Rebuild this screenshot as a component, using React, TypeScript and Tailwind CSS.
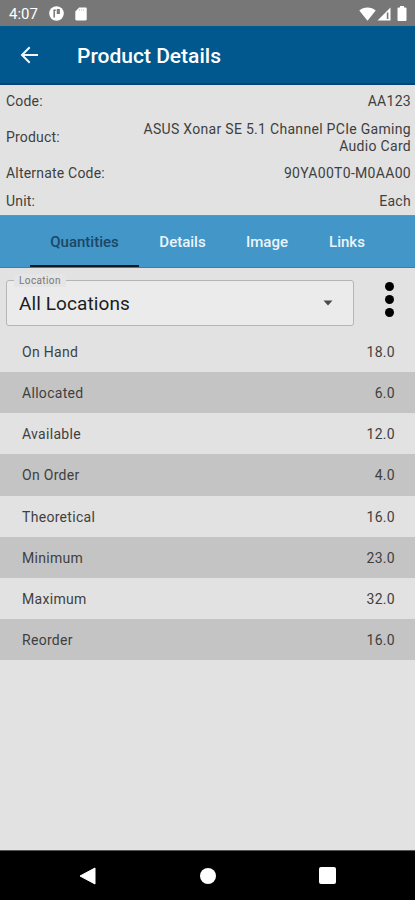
import { useState } from 'react'

const details = [
    { label: 'Code:', value: 'AA123', height: 'h-[29px]' },
    { label: 'Product:', value: 'ASUS Xonar SE 5.1 Channel PCIe Gaming Audio Card', height: 'h-[43px]' },
    { label: 'Alternate Code:', value: '90YA00T0-M0AA00', height: 'h-[29px]' },
    { label: 'Unit:', value: 'Each', height: 'h-[26px]' },
]

const tabs = [
    { label: 'Quantities', width: 'w-[109px]' },
    { label: 'Details', width: 'w-[87px]' },
    { label: 'Image', width: 'w-[82px]' },
    { label: 'Links', width: 'w-[78px]' },
]

const quantities = [
    { label: 'On Hand', value: 18 },
    { label: 'Allocated', value: 6 },
    { label: 'Available', value: 12 },
    { label: 'On Order', value: 4 },
    { label: 'Theoretical', value: 16 },
    { label: 'Minimum', value: 23 },
    { label: 'Maximum', value: 32 },
    { label: 'Reorder', value: 16 },
]

function StatusBar() {
    return (
        <div className="flex h-[26px] items-center bg-[#777777] pt-px pl-[9px] pr-[7px] text-white">
            <span className="w-[40px] pt-px text-[15px] leading-none">4:07</span>
            <svg width="15" height="15" viewBox="0 0 15 15" className="block">
                <circle cx="7.5" cy="7.5" r="7.3" fill="#fff" />
                <path d="M5.200 11.500V4.200M4.400 4.200h2.400M8.500 3.800h1.600v3.400H8.500z" fill="none" stroke="#777" strokeWidth="1.5" />
            </svg>
            <svg width="12" height="14" viewBox="0 0 12 14" className="ml-[11px] block">
                <path d="M4.2.5h6.3c.7 0 1.2.5 1.2 1.2v10.6c0 .7-.5 1.2-1.2 1.2h-9c-.7 0-1.2-.5-1.2-1.2V4.4z" fill="#fff" />
                <path d="M4.5 2v2M6.6 2v2M8.7 2v2" stroke="#ccc" strokeWidth=".8" />
            </svg>
            <svg width="17" height="14" viewBox="0 0 17 14" className="ml-auto block">
                <path d="M8.5 13.7.3 3.4C2.4 1.5 5.3.4 8.5.4s6.1 1.1 8.2 3z" fill="#fff" />
            </svg>
            <svg width="14" height="14" viewBox="0 0 14 14" className="ml-px block">
                <path d="M13.5.5v13H.5z" fill="#fff" />
                <path d="M10.6 5.5v6.5" stroke="#777" strokeWidth="1.6" />
            </svg>
            <svg width="10" height="15" viewBox="0 0 10 15" className="ml-[6px] mr-px block">
                <path d="M3 0h4v1.5h1.5c.5 0 1 .5 1 1V14c0 .5-.5 1-1 1h-7c-.5 0-1-.5-1-1V2.5c0-.5.5-1 1-1H3z" fill="#fff" />
            </svg>
        </div>
    )
}

function Header() {
    return (
        <header className="flex h-[59px] items-center border-b-2 border-[#004377] bg-[#00588e] pt-[2px] text-white">
            <button aria-label="Back" className="-mt-px ml-[20px]">
                <svg width="19" height="18" viewBox="0 0 19 18" className="block">
                    <path d="M18 9H2.5M9.7 1.3 2 9l7.7 7.7" fill="none" stroke="#f2f6fa" strokeWidth="2" />
                </svg>
            </button>
            <h1 className="ml-[38px] pt-[2px] text-[21px] font-medium">Product Details</h1>
        </header>
    )
}

function LocationSelect() {
    return (
        <div className="flex h-[63px] items-start pt-[12px] pl-[6px]">
            <div className="relative flex h-[46px] w-[348px] items-center rounded-[3px] border border-[#b5b5b5] bg-[#ebebeb] pl-3 pr-[20px]">
                <span className="absolute -top-[7px] left-[7px] bg-[#e5e5e5] px-[5px] text-[10px] leading-[13px] tracking-[0.4px] text-[#777]">
                    Location
                </span>
                <span className="pt-[2px] text-[19px] tracking-[0.1px] text-[#1c1c1c]">All Locations</span>
                <svg width="10" height="6" viewBox="0 0 10 6" className="ml-auto block">
                    <path d="M.5.5h9L5 5.5z" fill="#4a4a4a" />
                </svg>
            </div>
            <button aria-label="More options" className="ml-[31px] mt-[2px] flex flex-col gap-[4px]">
                <span className="size-[9px] rounded-full bg-black" />
                <span className="size-[9px] rounded-full bg-black" />
                <span className="size-[9px] rounded-full bg-black" />
            </button>
        </div>
    )
}

export default function App() {
    const [activeTab, setActiveTab] = useState('Quantities')

    return (
        <div className="flex h-[900px] w-[415px] flex-col overflow-hidden bg-[#e2e2e2] font-[Roboto,sans-serif] text-[#3f3f3f]">
            <StatusBar />
            <Header />

            <section className="h-[130px] pt-[2px] pl-[6px] pr-[4px] text-[14px] leading-[17px]">
                {details.map(item => (
                    <div key={item.label} className={`flex items-center justify-between ${item.height}`}>
                        <span className="tracking-[0.2px]">{item.label}</span>
                        <span className="w-[275px] text-right tracking-[0.3px]">{item.value}</span>
                    </div>
                ))}
            </section>

            <nav className="flex h-[53px] border-t border-b border-t-[#77909f] border-b-[#3580ae] bg-[#4296c8] pl-[30px]">
                {tabs.map(tab => (
                    <button
                        key={tab.label}
                        onClick={() => setActiveTab(tab.label)}
                        className={`border-b-2 pt-[4px] text-[15px] font-medium ${tab.width} ${
                            activeTab === tab.label ? 'border-[#101824] text-[#1b4766]' : 'border-transparent text-[#eaf5fb]'
                        }`}
                    >
                        {tab.label}
                    </button>
                ))}
            </nav>

            <LocationSelect />

            <div className="flex h-[329px] flex-col">
                {quantities.map(row => (
                    <div
                        key={row.label}
                        className="flex flex-1 items-center justify-between pt-[2px] pl-[22px] pr-[20px] text-[14px] tracking-[0.3px] even:bg-[#c4c4c4]"
                    >
                        <span>{row.label}</span>
                        <span>{row.value.toFixed(1)}</span>
                    </div>
                ))}
            </div>

            <div className="mt-auto flex h-[50px] items-center border-t border-[#555] bg-black pl-[79px]">
                <svg width="17" height="18" viewBox="0 0 17 18" className="block">
                    <path d="M16 1v16L1 9z" fill="#fff" stroke="#fff" strokeLinejoin="round" />
                </svg>
                <span className="ml-[104px] size-[16px] rounded-full bg-white" />
                <span className="ml-[103px] size-[17px] rounded-[2px] bg-white" />
            </div>
        </div>
    )
}
